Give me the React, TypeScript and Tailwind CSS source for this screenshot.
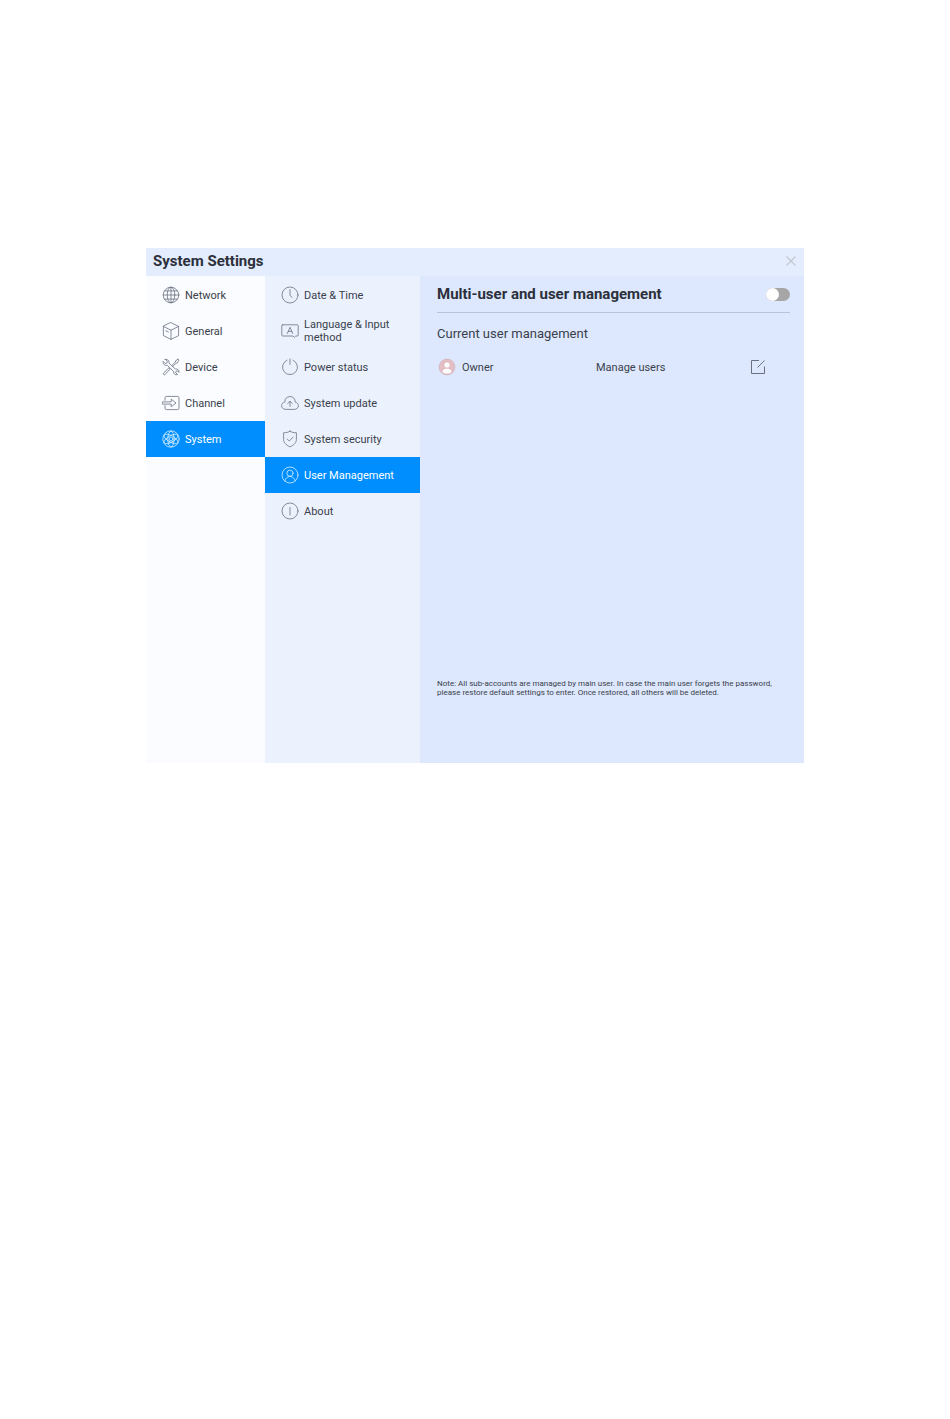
import { useState } from 'react';
import type { ReactNode } from 'react';

type Item = { name: string; icon: ReactNode };

function Icon({ children }: { children: ReactNode }) {
  return (
    <svg
      viewBox="0 0 18 18"
      className="size-[18px] shrink-0"
      fill="none"
      stroke="currentColor"
      strokeWidth="0.8"
      strokeLinecap="round"
      strokeLinejoin="round"
      aria-hidden="true"
    >
      {children}
    </svg>
  );
}

const sections: Item[] = [
  {
    name: 'Network',
    icon: (
      <Icon>
        <circle cx="9" cy="9" r="7.8" />
        <ellipse cx="9" cy="9" rx="3.8" ry="7.8" />
        <path d="M9 1.2v15.6M1.2 9h15.6M2.6 4.9h12.8M2.6 13.1h12.8" />
      </Icon>
    ),
  },
  {
    name: 'General',
    icon: (
      <Icon>
        <path d="M9 .6l7.6 3.8v9.2L9 17.4l-7.6-3.8V4.400z" />
        <path d="M1.400 4.400L9 8.200l7.600-3.800M9 8.200v9.200M3.800 8.800l2.600 1.200" />
      </Icon>
    ),
  },
  {
    name: 'Device',
    icon: (
      <Icon>
        <path d="M3.2 1.3l2.2 2.1-.5 1.7-1.7.4L1.2 3.4c-.6 2.7 1.6 4.7 4.1 3.9l6.4 6.3c-.3 2.3 1.5 3.7 3.9 3l-1.9-2 .4-1.4 1.5-.4 1.3 1.6c.4-2.5-1.4-3.9-3.6-3.4L7 5.1C7.5 2.7 5.7.8 3.2 1.3z" />
        <path d="M16 1.2l1 1-1.6 2.6-1.3.4-3.5 3.5M9.7 7.7l3.6-3.6.3-1.3L16 1.2M7.1 10.3l.9.9-4.900 5.200c-.5.5-1.200.4-1.600 0s-.4-1 .1-1.500z" />
      </Icon>
    ),
  },
  {
    name: 'Channel',
    icon: (
      <Icon>
        <path d="M3 6.300V3.800c0-.9.500-1.400 1.400-1.400h11.200c.9 0 1.400.5 1.400 1.400v10.400c0 .9-.5 1.400-1.400 1.400H4.400c-.9 0-1.400-.5-1.400-1.400v-2.500" />
        <path d="M.6 7.900h8.600V5.200L14 9l-4.800 3.800v-2.700H.6z" />
      </Icon>
    ),
  },
  {
    name: 'System',
    icon: (
      <Icon>
        <circle cx="9" cy="9" r="8.2" />
        <ellipse cx="9" cy="9" rx="3.2" ry="7.8" />
        <ellipse cx="9" cy="9" rx="3.2" ry="7.8" transform="rotate(60 9 9)" />
        <ellipse cx="9" cy="9" rx="3.2" ry="7.8" transform="rotate(120 9 9)" />
        <circle cx="9" cy="9" r="1.9" />
      </Icon>
    ),
  },
];

const pages: Item[] = [
  {
    name: 'Date & Time',
    icon: (
      <Icon>
        <circle cx="9" cy="9" r="8" />
        <path d="M9 3.500v5.700l2 2.300" />
      </Icon>
    ),
  },
  {
    name: 'Language & Input method',
    icon: (
      <Icon>
        <path d="M1.700 2.800h14.600c.6 0 .9.300.9.900v9.400c0 .6-.3.900-.9.900h-1.500l-1.400 1.400L12 14H1.700c-.6 0-.9-.3-.9-.9V3.700c0-.6.300-.9.900-.9z" />
        <path d="M6.300 11.500L9 5.300l2.700 6.200M7.300 9.400h3.400" />
      </Icon>
    ),
  },
  {
    name: 'Power status',
    icon: (
      <Icon>
        <path d="M6 2.200a7.500 7.500 0 1 0 6 0M9 1v5.500" />
      </Icon>
    ),
  },
  {
    name: 'System update',
    icon: (
      <Icon>
        <path d="M4.700 15.400C2.300 15.400.6 13.800.6 11.700c0-1.900 1.300-3.300 3.200-3.600C3.700 4.900 5.900 2.500 9 2.500s5.300 2.400 5.200 5.600c1.900.3 3.200 1.700 3.200 3.600 0 2.100-1.700 3.700-4.100 3.700z" />
        <path d="M9 12.400V7.500M6.700 9.500L9 7.300l2.300 2.200" />
      </Icon>
    ),
  },
  {
    name: 'System security',
    icon: (
      <Icon>
        <path d="M9 1.200c1.700 1.200 3.900 1.600 6.400 1.500v6.800c0 3-2.200 5.400-6.400 7.400-4.200-2-6.400-4.400-6.400-7.400V2.700C5.100 2.800 7.300 2.400 9 1.200z" />
        <path d="M6.100 8.900l2.200 2.200 3.700-4" />
      </Icon>
    ),
  },
  {
    name: 'User Management',
    icon: (
      <Icon>
        <circle cx="9" cy="9" r="8" />
        <circle cx="9" cy="7.200" r="3.100" />
        <path d="M3.900 14.900c.5-2.600 2.300-4.200 5.100-4.600 2.800.4 4.600 2 5.100 4.600" />
      </Icon>
    ),
  },
  {
    name: 'About',
    icon: (
      <Icon>
        <circle cx="9" cy="9" r="8" />
        <path d="M9 5.500v7.500" />
      </Icon>
    ),
  },
];

type MenuProps = {
  label: string;
  items: Item[];
  active: string;
  onSelect: (name: string) => void;
  className: string;
};

function Menu({ label, items, active, onSelect, className }: MenuProps) {
  return (
    <nav aria-label={label} className={`flex shrink-0 flex-col pt-px ${className}`}>
      {items.map((item) => (
        <button
          key={item.name}
          type="button"
          onClick={() => onSelect(item.name)}
          className={`flex h-9 items-center pl-4 text-left text-[11px] leading-[13px] ${
            item.name === active ? 'bg-[#008eff] text-white' : 'text-[#3a3f4b]'
          }`}
        >
          <span className={item.name === active ? 'text-[#d5efff]' : 'text-[#6b7180]'}>{item.icon}</span>
          <span className="ml-[5px] max-w-[100px]">{item.name}</span>
        </button>
      ))}
    </nav>
  );
}

export default function App() {
  const [section, setSection] = useState('System');
  const [page, setPage] = useState('User Management');
  const [multiUser, setMultiUser] = useState(false);

  return (
    <div className="min-h-screen bg-white pt-[248px] font-['Roboto','Liberation_Sans',sans-serif]">
      <div className="mx-auto flex min-h-[515px] w-full max-w-[658px] flex-col bg-[#dde8fe]">
        <header className="flex h-7 items-center justify-between bg-[#e3edfe] pb-0.5 pl-[7px] pr-[7px]">
          <h1 className="text-[15px] font-bold leading-5 text-[#2c303a]">System Settings</h1>
          <button type="button" aria-label="Close" className="text-[#c3c8d0]">
            <svg viewBox="0 0 12 12" className="size-3" fill="none" stroke="currentColor" strokeWidth="1.1" aria-hidden="true">
              <path d="M1.500 1.500l9 9M10.500 1.500l-9 9" />
            </svg>
          </button>
        </header>

        <div className="flex grow">
          <Menu label="Sections" items={sections} active={section} onSelect={setSection} className="w-[119px] bg-[#fafcff]" />
          <Menu label="System" items={pages} active={page} onSelect={setPage} className="w-[155px] bg-[#ebf2fe]" />

          <main className="flex min-w-0 grow flex-col pl-[17px] pr-[14px] text-[#3a3f4b]">
            <div className="flex h-[37px] items-center justify-between border-b border-[#b8c2da]">
              <h2 className="text-[15px] font-bold leading-5 text-[#2c303a]">Multi-user and user management</h2>
              <label className="flex h-[13px] w-6 rounded-full bg-[#a6a6a6]">
                <input
                  type="checkbox"
                  role="switch"
                  aria-label="Multi-user and user management"
                  checked={multiUser}
                  onChange={(e) => setMultiUser(e.target.checked)}
                  className="peer sr-only"
                />
                <span className="size-[13px] rounded-full bg-white peer-checked:ml-auto" />
              </label>
            </div>

            <h3 className="mt-3 text-[13px] leading-[18px]">Current user management</h3>

            <div className="mt-3 flex h-6 items-center text-[11px] leading-[13px]">
              <svg viewBox="0 0 18 18" className="ml-px size-[18px]" aria-hidden="true">
                <circle cx="9" cy="9" r="7.900" fill="#e3bfc5" stroke="#cfa9b1" strokeWidth="0.6" />
                <circle cx="9" cy="7" r="3.100" fill="#fff" stroke="#d39c9f" strokeWidth="0.5" />
                <path d="M4 14.200c.2-2.600 1.900-4 5-4s4.800 1.400 5 4c-2.700 2.400-7.300 2.400-10 0z" fill="#fff" stroke="#d39c9f" strokeWidth="0.5" />
              </svg>
              <span className="ml-1.5 w-[134px]">Owner</span>
              <span>Manage users</span>
              <button type="button" aria-label="Edit users" className="ml-auto mr-[23px] text-[#6b7180]">
                <svg viewBox="0 0 18 18" className="size-[18px]" fill="none" stroke="currentColor" strokeWidth="1" aria-hidden="true">
                  <path d="M10 2.500H2.500v13h13V8.500M8.500 9.500L15.500 2.500" />
                </svg>
              </button>
            </div>

            <p className="mb-[66px] mt-auto max-w-[340px] text-[8px] leading-[9px]">
              Note: All sub-accounts are managed by main user. In case the main user forgets the password, please restore
              default settings to enter. Once restored, all others will be deleted.
            </p>
          </main>
        </div>
      </div>
    </div>
  );
}
